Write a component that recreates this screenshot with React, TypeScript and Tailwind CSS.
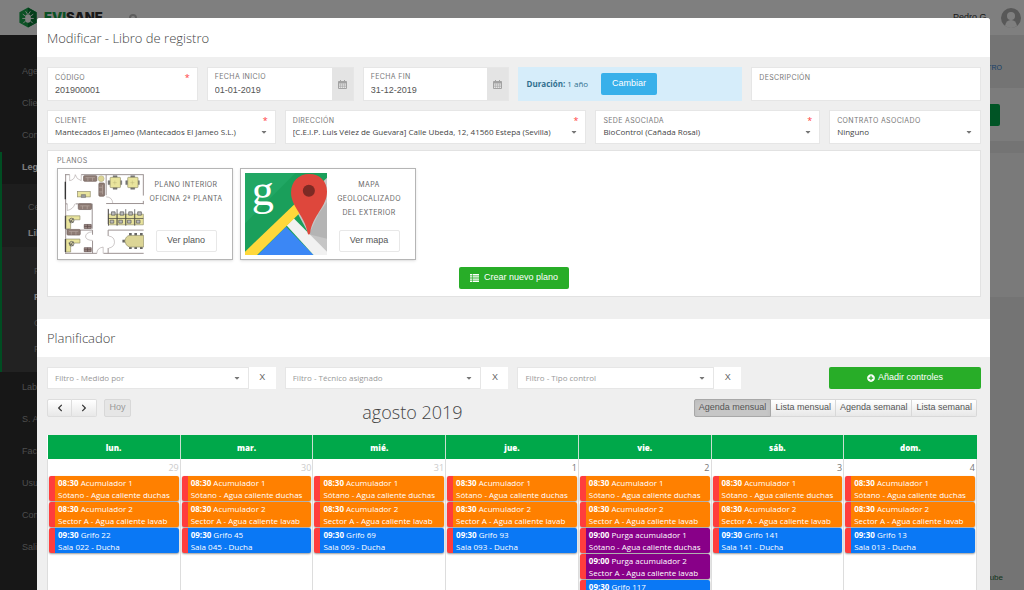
import type { ReactNode } from 'react'
import { FaCaretDown, FaChevronLeft, FaChevronRight, FaPlusCircle } from 'react-icons/fa'

const LABEL = "font-['Inter'] text-[7px] leading-[10px] uppercase tracking-wider text-[#777]"
const FIELD = 'block h-[34px] min-w-0 border border-[#e6e6e6] bg-white px-[7px] pt-[5px]'
const TEXT_VALUE = "block w-full min-w-0 bg-transparent font-['Liberation_Sans'] text-[9px] leading-[14px] text-[#555] outline-none"

type CalendarEvent = { time: string; title: string; place: string; kind: 'tank' | 'tap' | 'purge' }
type Day = { name: string; number: number; muted?: boolean; events: CalendarEvent[] }

const eventColors = {
  tank: 'bg-[#ff8000]',
  tap: 'bg-[#0a78f5]',
  purge: 'bg-[#880088]',
}

const tanks: CalendarEvent[] = [
  { time: '08:30', title: 'Acumulador 1', place: 'Sótano - Agua caliente duchas', kind: 'tank' },
  { time: '08:30', title: 'Acumulador 2', place: 'Sector A - Agua caliente lavab', kind: 'tank' },
]

const purges: CalendarEvent[] = [
  { time: '09:00', title: 'Purga acumulador 1', place: 'Sótano - Agua caliente duchas', kind: 'purge' },
  { time: '09:00', title: 'Purga acumulador 2', place: 'Sector A - Agua caliente lavab', kind: 'purge' },
]

function tap(n: string, room: string): CalendarEvent {
  return { time: '09:30', title: `Grifo ${n}`, place: `Sala ${room} - Ducha`, kind: 'tap' }
}

const days: Day[] = [
  { name: 'lun.', number: 29, muted: true, events: [...tanks, tap('22', '022')] },
  { name: 'mar.', number: 30, muted: true, events: [...tanks, tap('45', '045')] },
  { name: 'mié.', number: 31, muted: true, events: [...tanks, tap('69', '069')] },
  { name: 'jue.', number: 1, events: [...tanks, tap('93', '093')] },
  { name: 'vie.', number: 2, events: [...tanks, ...purges, tap('117', '117')] },
  { name: 'sáb.', number: 3, events: [...tanks, tap('141', '141')] },
  { name: 'dom.', number: 4, events: [...tanks, tap('13', '013')] },
]

function Required() {
  return <span className="text-[9px] leading-[10px] text-[#ff3d3d]" aria-hidden="true">*</span>
}

function CalendarIcon() {
  return (
    <svg viewBox="0 0 18 18" className="h-[9px] w-[9px]" fill="none" stroke="#a2a2a2" aria-hidden="true">
      <path d="M1 3h16v14H1z" strokeWidth="2" />
      <path d="M1 5h16" strokeWidth="4" />
      <path d="M5 0v4M13 0v4" strokeWidth="2" />
      <path d="M1 10h16M1 13h16M5 7v10M9 7v10M13 7v10" strokeWidth="1" />
    </svg>
  )
}

function ListIcon() {
  return (
    <svg viewBox="0 0 9 8" className="h-2 w-[9px]" fill="none" stroke="currentColor" aria-hidden="true">
      <path d="M0 .7h2M0 2.9h2M0 5.1h2M0 7.3h2M2.6 .7H9M2.6 2.9H9M2.6 5.1H9M2.6 7.3H9" strokeWidth="1.4" />
    </svg>
  )
}

function TextField({ id, label, value, required }: { id: string; label: string; value: string; required?: boolean }) {
  return (
    <div className={FIELD}>
      <div className="flex justify-between">
        <label htmlFor={id} className={LABEL}>{label}</label>
        {required && <Required />}
      </div>
      <input id={id} className={TEXT_VALUE} defaultValue={value} />
    </div>
  )
}

function DateField({ id, label, value }: { id: string; label: string; value: string }) {
  return (
    <div className="flex h-[34px] min-w-0 border border-[#e6e6e6] bg-white">
      <div className="flex min-w-0 flex-1 flex-col pl-[7px] pt-[4px]">
        <label htmlFor={id} className={LABEL}>{label}</label>
        <input id={id} className={`${TEXT_VALUE} mt-px`} defaultValue={value} />
      </div>
      <button aria-label={`Abrir calendario: ${label}`} className="flex w-[21px] items-center justify-center bg-[#e4e4e4]">
        <CalendarIcon />
      </button>
    </div>
  )
}

function SelectField({ id, label, value, required }: { id: string; label: string; value: string; required?: boolean }) {
  return (
    <div className={FIELD}>
      <div className="flex justify-between">
        <label htmlFor={id} className={LABEL}>{label}</label>
        {required && <Required />}
      </div>
      <div className="flex items-center">
        <select id={id} className="h-3 min-w-0 flex-1 appearance-none bg-transparent text-[8px] leading-3 text-[#444]">
          <option>{value}</option>
        </select>
        <FaCaretDown size={8} className="shrink-0 text-[#777]" />
      </div>
    </div>
  )
}

function Filter({ label }: { label: string }) {
  return (
    <div className="flex h-[22px] min-w-0 bg-white">
      <div className="flex min-w-0 flex-1 items-center border border-[#e6e6e6] px-[7px]">
        <select aria-label={label} className="h-4 min-w-0 flex-1 appearance-none bg-transparent text-[8px] leading-4 text-[#999]">
          <option>{label}</option>
        </select>
        <FaCaretDown size={8} className="shrink-0 text-[#777]" />
      </div>
      <button aria-label={`Quitar ${label}`} className="w-[27px] font-['Liberation_Sans'] text-[9px] text-[#666]">X</button>
    </div>
  )
}

function PlanCard({ drawing, action, children }: { drawing: ReactNode; action: string; children: ReactNode }) {
  return (
    <article className="flex h-[92px] w-[176px] border border-[#b5b5b5] bg-white p-[4px] shadow-sm">
      {drawing}
      <div className="flex flex-1 flex-col items-center justify-between pb-[3px] pt-[5px]">
        <h3 className="whitespace-nowrap text-center font-['Inter'] text-[7px] leading-[14px] uppercase tracking-wider text-[#666]">{children}</h3>
        <button className="h-[22px] w-[61px] rounded-[2px] border border-[#e8e8e8] font-['Liberation_Sans'] text-[9px] text-[#555]">{action}</button>
      </div>
    </article>
  )
}

function Desk({ x, y }: { x: number; y: number }) {
  return (
    <g transform={`translate(${x} ${y})`}>
      <path d="M0 0h42v12h-28v27h-14z" fill="#e9e49d" stroke="#8f8b68" strokeWidth="2" />
      <circle cx="17" cy="14" r="7" fill="#cfcaa0" stroke="#555" strokeWidth="2" />
      <path d="M12 20l10-12M8 12l14 8" stroke="#444" strokeWidth="2" />
      <path d="M-2 0v39" stroke="#333" strokeWidth="3" />
    </g>
  )
}

function Sofa({ x, y, vertical }: { x: number; y: number; vertical?: boolean }) {
  return (
    <g transform={vertical ? `translate(${x + 18} ${y}) rotate(90)` : `translate(${x} ${y})`}>
      <rect width="40" height="17" rx="3" fill="#8f7d76" stroke="#6d5d58" strokeWidth="2" />
      <path d="M6 6h28M13 6v10M27 6v10" stroke="#b7a9a2" strokeWidth="2" />
    </g>
  )
}

function FloorPlan() {
  return (
    <svg viewBox="66 68 247 247" className="h-[82px] w-[82px] shrink-0" role="img" aria-label="Plano de la oficina">
      <g fill="none" stroke="#9b9292" strokeWidth="3">
        <path d="M77 72v240M75 73h14M124 73h188M199 73v62M199 160h113M311 73v63M311 152v10" />
        <path d="M77 161h5M107 161h50v75M77 238h10M120 240h38v14M158 272v38M77 310h94M191 310h121M205 240h107M205 240v18M205 294v16M205 176v46" />
        <path d="M89 73v18q15-2 17-18 3 14 18 18v-18M82 161v20q18-4 23-20M199 140q18 0 20 19M158 245q-22 2-21 16 4 10 21 10M171 310q0-16 19-19v19M207 258q18 2 17 20-2 14-17 16" strokeWidth="1.5" />
      </g>
      <path d="M76 94v53" stroke="#333" strokeWidth="4" />
      <Sofa x={131} y={76} />
      <Sofa x={176} y={98} vertical />
      <Sofa x={115} y={161} />
      <Sofa x={81} y={238} />
      <circle cx="184" cy="85" r="9" fill="#dcd596" stroke="#8f8b68" />
      {[225, 278].map(x => (
        <g key={x}>
          <path d={`M${x - 5} 76h12v41h-12zM${x - 20} 91h41v12h-41z`} fill="#777" stroke="#444" />
          <rect x={x - 14} y="81" width="31" height="31" rx="2" fill="#e9e49d" stroke="#8f8b68" strokeWidth="2" />
          <path d={`M${x} 91v12M${x - 6} 97h12`} stroke="#aaa46d" />
        </g>
      ))}
      <rect x="113" y="124" width="38" height="16" fill="#e9e49d" stroke="#8f8b68" strokeWidth="2" />
      <path d="M124 133h13v9h-13z" fill="#999" stroke="#444" />
      <Desk x={78} y={197} />
      <Desk x={78} y={267} />
      {[223, 293].map(y => (
        <path key={y} d={`M133 ${y}h21v12h-21z M133 ${y + 6}h21M143 ${y}v12`} fill="#9a8783" stroke="#5c4b49" strokeWidth="2" />
      ))}
      {[206, 232, 258, 285].map(x => (
        <g key={x}>
          <path d={`M${x} 192h26v32h-26z`} fill="#e9e49d" stroke="#8f8b68" strokeWidth="2" />
          <path d={`M${x} 177v50M${x} 205h26`} stroke="#333" strokeWidth="2" />
          <path d={`M${x + 9} 185h11v10h-11zM${x + 5} 210h11v9h-11z`} fill="#bbb" stroke="#555" strokeWidth="2" />
        </g>
      ))}
      <path d="M248 273h10M268 253h8M284 253h8M301 253h8M268 293h8M284 293h8M301 293h8" stroke="#666" strokeWidth="8" />
      <path d="M312 256h-43q-11 2-14 17 3 15 14 18h43z" fill="#dcd596" stroke="#8f8b68" strokeWidth="2" />
    </svg>
  )
}

function MapLogo() {
  return (
    <svg viewBox="0 0 244 244" className="h-[82px] w-[82px] shrink-0 overflow-visible" role="img" aria-label="Mapa">
      <path d="M0 0h244v244H0z" fill="#1a9f5b" />
      <path d="M0 0h150L0 150z" fill="#21a764" />
      <path d="M148 104l96-90v230h-20z" fill="#c6c6c6" />
      <path d="M190 182l30-62 24-34v110z" fill="#b4b4b4" />
      <path d="M122 160l82 84H38z" fill="#3b87f5" />
      <path d="M124 156l21-21 99 99v10h-40z" fill="#f1f1f1" />
      <path d="M0 234L148 92l18 24L36 244H0z" fill="#ffd83b" />
      <path d="M190 183c-2 0-3-2-4-6-8-50-49-76-49-119C137 25 160 3 191 3c32 0 53 22 53 52 0 45-42 70-50 122-1 4-2 6-4 6z" fill="#de473c" />
      <circle cx="190" cy="53" r="18" fill="#7d2a24" />
      <text x="20" y="94" fill="#fff" fontSize="132" fontFamily="Liberation Serif, serif">g</text>
    </svg>
  )
}

function Planner() {
  return (
    <table className="mt-[10px] w-full table-fixed border-collapse bg-white">
      <thead>
        <tr>
          {days.map(day => (
            <th key={day.name} scope="col" className="h-6 border-x border-[#c9dfd1] bg-[#00a84a] pt-px text-[8px] font-extrabold text-white first:border-l-0 last:border-r-0">
              {day.name}
            </th>
          ))}
        </tr>
      </thead>
      <tbody>
        <tr>
          {days.map(day => (
            <td key={day.name} className="h-[220px] border-x border-[#ddd] px-px align-top">
              <div className={`h-[17px] pt-[3px] text-right text-[9px] leading-3 ${day.muted ? 'text-[#ccc]' : 'text-[#777]'}`}>
                {day.number}
              </div>
              {day.events.map((event, i) => (
                <a
                  key={i}
                  href="#evento"
                  className={`mb-px block h-[25px] overflow-hidden whitespace-nowrap rounded-[2px] border-l-[6px] border-[#ff3d3d] pl-[3px] pt-px text-[8px] leading-3 text-white shadow-[0_1px_2px_rgba(0,0,0,0.4)] ${eventColors[event.kind]}`}
                >
                  <div><strong>{event.time}</strong> {event.title}</div>
                  <div>{event.place}</div>
                </a>
              ))}
            </td>
          ))}
        </tr>
      </tbody>
    </table>
  )
}

function Menu({ items, className }: { items: string[]; className: string }) {
  return (
    <>
      {items.map((item, i) => (
        <a key={i} href="#menu" className={`flex items-center ${className}`}>{item}</a>
      ))}
    </>
  )
}

// Page that stays behind the dialog
function Backdrop() {
  return (
    <div className="flex h-full flex-col bg-[#e8e8e8] font-['Liberation_Sans'] text-[9px]" aria-hidden="true">
      <header className="flex h-[35px] shrink-0 items-center bg-white pl-[18px] pr-[3px]">
        <svg viewBox="0 0 40 44" className="h-[21px] w-5">
          <path d="M20 1l18 10v22L20 43 2 33V11z" fill="#16a34a" />
          <path d="M20 1l18 10v22L20 43z" fill="#087a35" />
          <ellipse cx="20" cy="24" rx="6" ry="9" fill="#fff" />
          <path d="M9 15l7 5M31 15l-7 5M8 24h24M10 34l6-6M30 34l-6-6M15 9l4 6M25 9l-4 6" stroke="#fff" strokeWidth="2" />
        </svg>
        <span className="ml-[6px] font-['Inter'] text-[13px] font-black text-[#333]"><span className="text-[#16a34a]">EVI</span>SANE</span>
        <span className="ml-[26px] h-2 w-2 rounded-full border-2 border-[#bbb]" />
        <span className="ml-auto text-[#333]">Pedro G.</span>
        <svg viewBox="0 0 20 20" className="ml-3 h-5 w-5">
          <circle cx="10" cy="10" r="10" fill="#b0b0b0" />
          <circle cx="10" cy="8" r="4" fill="#fff" />
          <path d="M4 18q1-6 6-6t6 6q-6 4-12 0z" fill="#fff" />
        </svg>
      </header>
      <div className="flex min-h-0 flex-1">
        <nav className="w-[150px] shrink-0 bg-[#2e2e2e] pt-[21px] text-[#999]">
          <Menu items={['Age', 'Clie', 'Con']} className="h-8 pl-[22px]" />
          <div className="border-l-2 border-[#009a44]">
            <Menu items={['Leg']} className="h-8 pl-5 font-bold text-white" />
            <div className="bg-[#3a3a3a] pt-[11px]">
              <Menu items={['Ce']} className="h-[26px] pl-[26px]" />
              <Menu items={['Lib']} className="h-[26px] pl-[26px] font-bold text-white" />
              <div className="bg-[#444] pb-[9px] pt-3">
                <Menu items={['P']} className="h-[26px] pl-8" />
                <Menu items={['P']} className="h-[26px] pl-8 font-bold text-white" />
                <Menu items={['C', 'P']} className="h-[26px] pl-8" />
              </div>
            </div>
          </div>
          <Menu items={['Lab', 'S. A', 'Fac', 'Usu', 'Con', 'Sali']} className="h-8 pl-[22px]" />
        </nav>
        <div className="flex flex-1 flex-col text-right">
          <div className="h-[53px] pr-[22px] pt-[28px] text-[7px] text-[#2f7fd0]">TRO</div>
          <div className="flex h-[53px] items-center justify-end bg-[#f8f8f8] pr-6">
            <span className="h-[22px] w-20 rounded-[2px] bg-[#00a84a]" />
          </div>
          <div className="mt-3 h-36 bg-[#f4f4f4]" />
          <div className="mt-auto pb-[6px] pr-[21px] text-[8px] text-[#1f6a3a]">ube</div>
        </div>
      </div>
    </div>
  )
}

const VIEW_BUTTON = 'h-[18px] border-y border-r border-[#d8d8d8] bg-linear-to-b from-white to-[#e8e8e8] px-1 text-[#555]'

export default function App() {
  return (
    <div className="relative h-screen overflow-hidden font-['Open_Sans',sans-serif]">
      <Backdrop />
      <div className="absolute inset-0 bg-black/50 pl-[37px] pr-[34px] pt-[18px]">
        <div role="dialog" aria-labelledby="dialog-title" className="min-h-full overflow-hidden rounded-t-[3px] bg-[#efefef]">
          <header className="flex h-[39px] items-center bg-white px-[10px] pt-[2px]">
            <h1 id="dialog-title" className="text-[13px] font-light text-[#444]">Modificar - Libro de registro</h1>
          </header>

          <section className="pl-[10px] pr-[9px] pt-[10px]">
            <div className="grid grid-cols-[151fr_147fr_146fr_225fr_230fr] gap-[9px]">
              <TextField id="codigo" label="Código" value="201900001" required />
              <DateField id="inicio" label="Fecha inicio" value="01-01-2019" />
              <DateField id="fin" label="Fecha fin" value="31-12-2019" />
              <div className="flex h-[34px] items-center gap-[13px] bg-[#d6edfa] pl-[9px] text-[8px] text-[#31708f]">
                <span><strong>Duración:</strong> 1 año</span>
                <button className="h-[22px] w-14 rounded-[2px] bg-[#38b0ea] font-['Liberation_Sans'] text-[9px] text-white">Cambiar</button>
              </div>
              <TextField id="descripcion" label="Descripción" value="" />
            </div>
            <div className="mt-[9px] grid grid-cols-[229fr_302fr_225fr_152fr] gap-[9px]">
              <SelectField id="cliente" label="Cliente" value="Mantecados El Jameo (Mantecados El Jameo S.L.)" required />
              <SelectField id="direccion" label="Dirección" value="[C.E.I.P. Luis Vélez de Guevara] Calle Ubeda, 12, 41560 Estepa (Sevilla)" required />
              <SelectField id="sede" label="Sede asociada" value="BioControl (Cañada Rosal)" required />
              <SelectField id="contrato" label="Contrato asociado" value="Ninguno" />
            </div>

            <div className="mt-[6px] border border-[#e2e2e2] bg-white px-[9px] pb-[7px] pt-[5px]">
              <h2 className={LABEL}>Planos</h2>
              <div className="mt-[2px] flex gap-[7px]">
                <PlanCard drawing={<FloorPlan />} action="Ver plano">
                  Plano interior<br />Oficina 2ª planta
                </PlanCard>
                <PlanCard drawing={<MapLogo />} action="Ver mapa">
                  Mapa<br />geolocalizado<br />del exterior
                </PlanCard>
              </div>
              <button className="mx-auto mt-[7px] flex h-[22px] w-[110px] items-center justify-center gap-[5px] rounded-[2px] bg-[#28ad28] font-['Liberation_Sans'] text-[9px] text-white">
                <ListIcon /> Crear nuevo plano
              </button>
            </div>
          </section>

          <header className="mt-[22px] flex h-[38px] items-center bg-white px-[10px] pt-[2px]">
            <h2 className="text-[13px] font-light text-[#444]">Planificador</h2>
          </header>

          <section className="pl-[10px] pr-[9px] pt-[10px]">
            <div className="grid grid-cols-[229fr_224fr_224fr_70fr_152fr] gap-x-[9px]">
              <Filter label="Filtro - Medido por" />
              <Filter label="Filtro - Técnico asignado" />
              <Filter label="Filtro - Tipo control" />
              <button className="col-start-5 flex h-[22px] items-center justify-center gap-[3px] rounded-[2px] bg-[#28ad28] font-['Liberation_Sans'] text-[9px] text-white">
                <FaPlusCircle size={8} /> Añadir controles
              </button>
            </div>

            <div className="mt-[10px] pr-1">
              <div className="flex items-start justify-between font-['Liberation_Sans'] text-[9px]">
                <div className="flex">
                  <button aria-label="Anterior" className="flex h-[18px] w-[25px] items-center justify-center rounded-l-[2px] border border-[#ddd] bg-linear-to-b from-white to-[#e8e8e8] text-[#333]">
                    <FaChevronLeft size={8} />
                  </button>
                  <button aria-label="Siguiente" className="flex h-[18px] w-[25px] items-center justify-center rounded-r-[2px] border border-l-0 border-[#ddd] bg-linear-to-b from-white to-[#e8e8e8] text-[#333]">
                    <FaChevronRight size={8} />
                  </button>
                  <button className="ml-[7px] h-[18px] w-[27px] rounded-[2px] border border-[#d8d8d8] bg-[#e6e6e6] text-[#999]">Hoy</button>
                </div>
                <h3 className="font-['Open_Sans'] text-[18px] leading-[26px] font-light text-[#444]">agosto 2019</h3>
                <div className="flex">
                  <button className="h-[18px] rounded-l-[2px] border border-[#a8a8a8] bg-[#c6c6c6] px-1 text-[#555] shadow-inner">Agenda mensual</button>
                  <button className={VIEW_BUTTON}>Lista mensual</button>
                  <button className={VIEW_BUTTON}>Agenda semanal</button>
                  <button className={`${VIEW_BUTTON} rounded-r-[2px]`}>Lista semanal</button>
                </div>
              </div>
              <Planner />
            </div>
          </section>
        </div>
      </div>
    </div>
  )
}
